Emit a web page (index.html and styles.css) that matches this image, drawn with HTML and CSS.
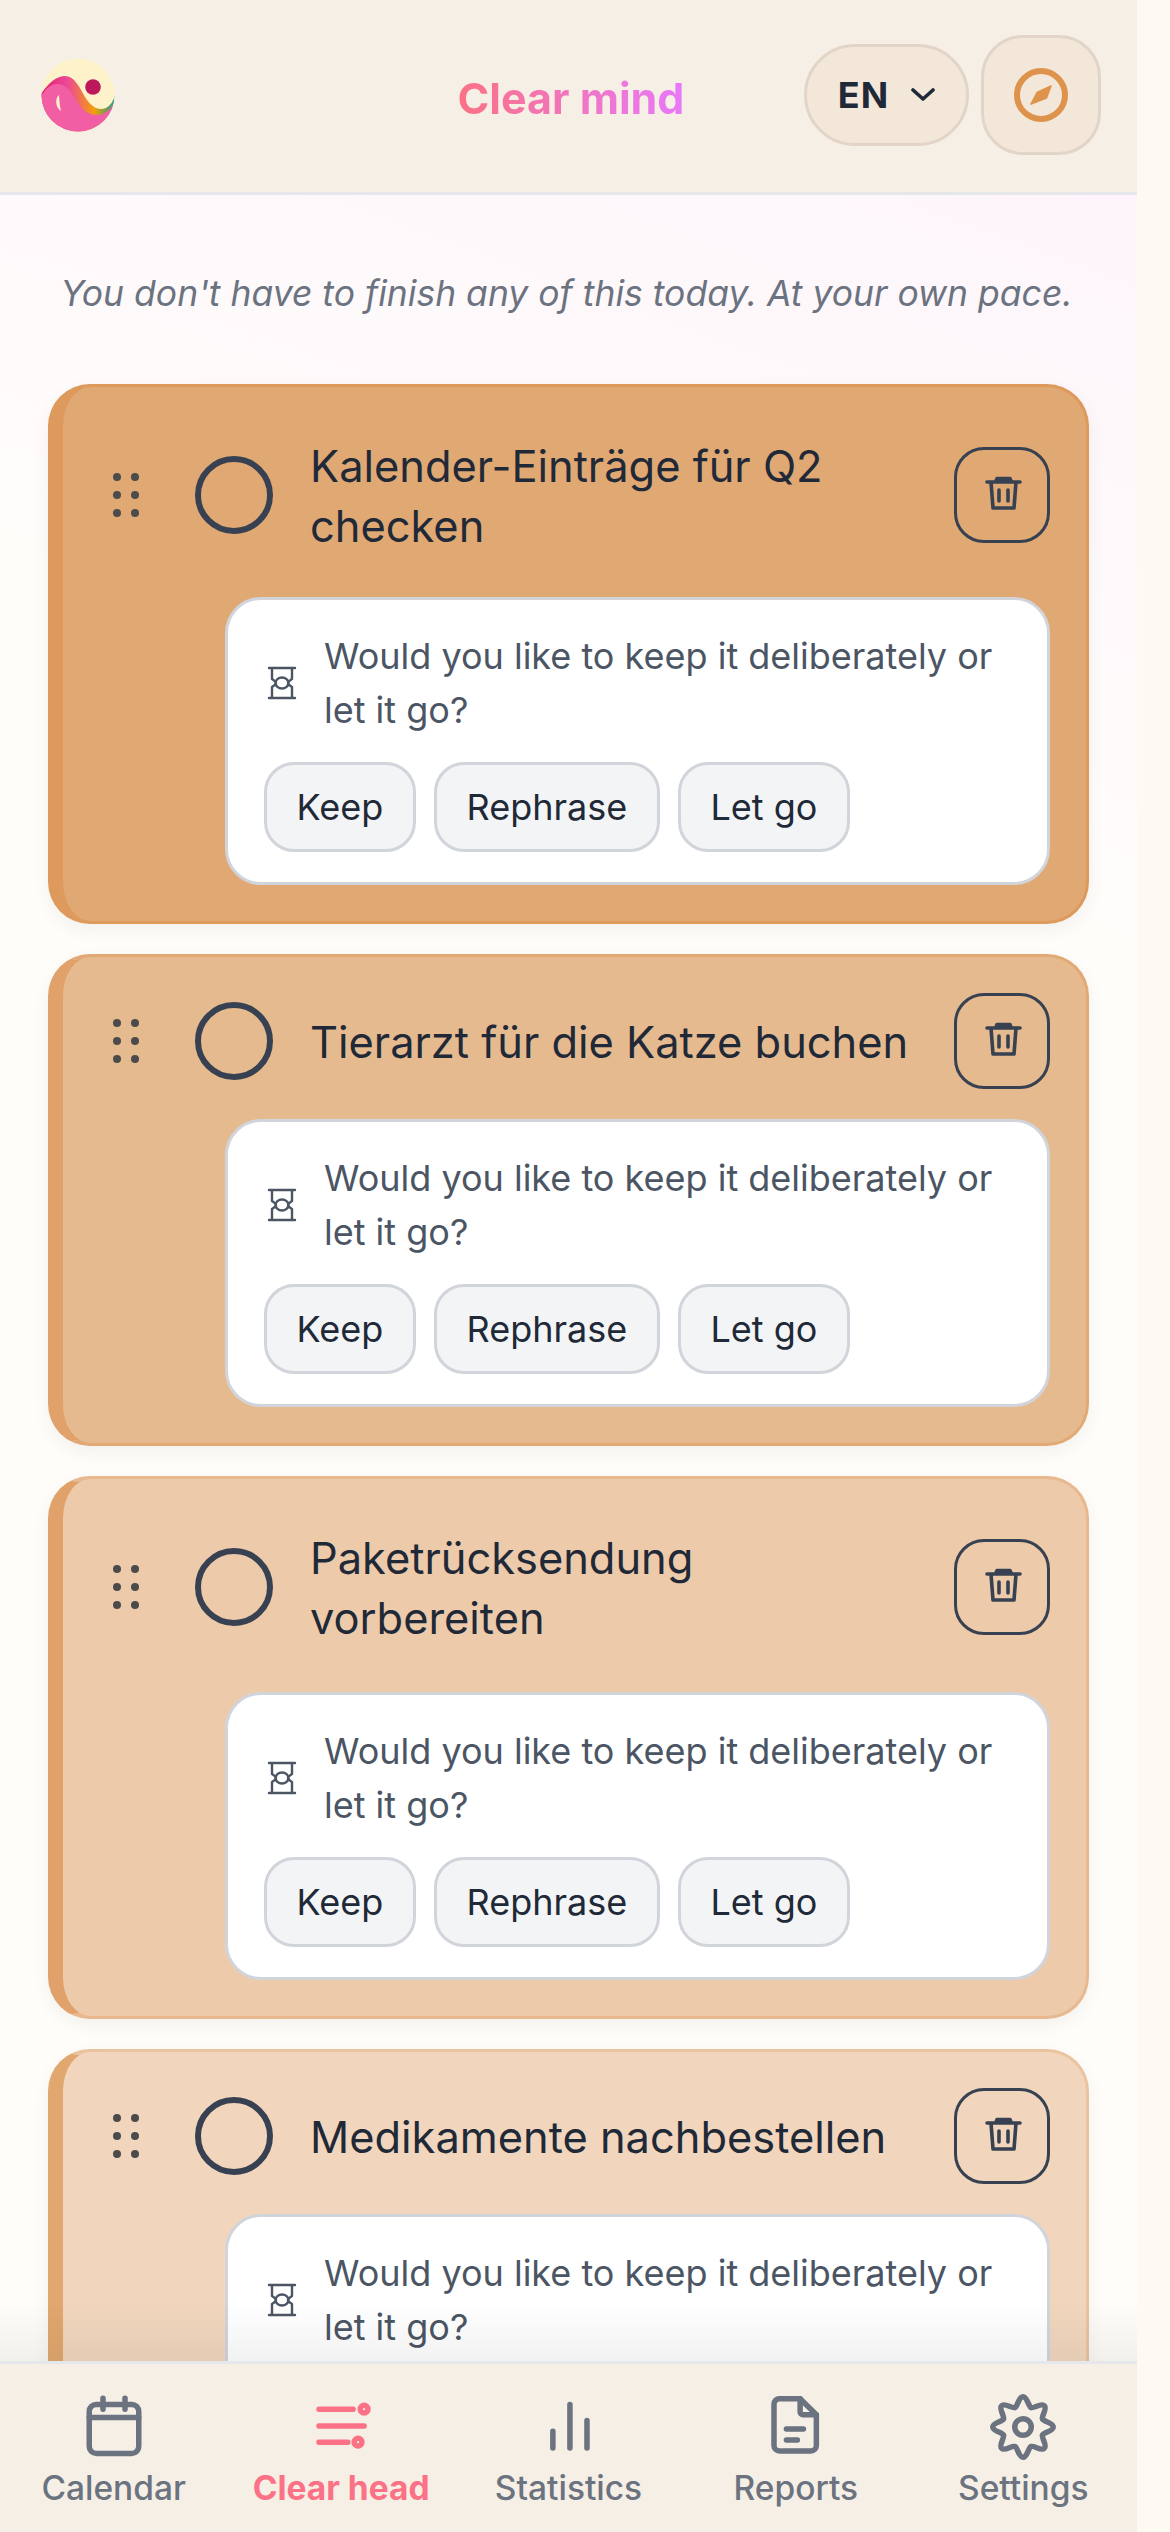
FILE: index.html
```html
<!DOCTYPE html>
<html lang="en">
<head>
  <meta charset="UTF-8" />
  <meta name="viewport" content="width=device-width, initial-scale=1.0"/>
  <title>Clear mind</title>
  <link rel="stylesheet" href="styles.css">
</head>
<body>
<svg class="defs" width="0" height="0" aria-hidden="true">
  <symbol id="dots" viewBox="0 0 60 60"><g fill="currentColor"><circle cx="21" cy="12" r="4"/><circle cx="39" cy="12" r="4"/><circle cx="21" cy="30" r="4"/><circle cx="39" cy="30" r="4"/><circle cx="21" cy="48" r="4"/><circle cx="39" cy="48" r="4"/></g></symbol>
  <symbol id="trash" viewBox="0 0 48 48"><g fill="none" stroke="currentColor" stroke-width="3.600" stroke-linecap="round" stroke-linejoin="round"><path d="M9 11h33M13 11l2 26h21l2-26M18 10l1-2.500h13l1 2.500M21 19v11M30 19v11"/></g></symbol>
  <symbol id="hourglass" viewBox="0 0 36 36"><g fill="none" stroke="currentColor" stroke-width="2.400" stroke-linecap="round"><path d="M5 3h26M5 33h26M8 3v11l4 3M28 3v11l-4 3M8 33v-11l4-3M28 33v-11l-4-3"/><ellipse cx="18" cy="18" rx="6.500" ry="5.500"/></g></symbol>
  <symbol id="lobe" viewBox="0 0 24 24"><path d="M19.110 9.050C19.570 10.160 23 10.400 23 12C23 13.600 19.570 13.840 19.110 14.950"/></symbol>
</svg>
<div class="app">
  <header class="topbar">
    <svg class="logo" viewBox="0 0 74 74">
      <defs>
        <linearGradient id="wave" x1="0" x2="1" y1="0" y2="0">
          <stop offset="0" stop-color="#e11d68"/><stop offset=".35" stop-color="#ec4899"/><stop offset=".72" stop-color="#f59e0b"/><stop offset="1" stop-color="#14a085"/>
        </linearGradient>
        <clipPath id="disc"><circle cx="37" cy="37" r="36.500"/></clipPath>
      </defs>
      <g clip-path="url(#disc)">
        <rect width="74" height="74" fill="#fdf2c9"/>
        <path d="M0 36C8 24 16 18 24 18c9 0 14 10 20 21 4 6 9 12 16 12 7 0 12-6 14-14v37H0z" fill="url(#wave)"/>
        <path d="M0 38c6-9 10-12 17-12 9 0 14 10 22 22 5 6 10 9 17 9 8 0 15-6 18-16v33H0z" fill="#f25ea3"/>
      </g>
      <circle cx="52" cy="29" r="7.800" fill="#be185d"/>
      <path d="M18 37c-4 3-4 12 2 16-1.500-5-1.500-11-2-16z" fill="#fdf2c9"/>
    </svg>
    <h1 class="brand">Clear mind</h1>
    <div class="topbar-actions">
      <button class="lang">EN
        <svg width="24" height="24" viewBox="0 0 24 24" fill="none" stroke="currentColor" stroke-width="3.600" stroke-linecap="round" stroke-linejoin="round"><path d="M2 7l10 9 10-9"/></svg>
      </button>
      <button class="compass">
        <svg width="54" height="54" viewBox="0 0 54 54"><circle cx="27" cy="27" r="24" fill="none" stroke="#dd934b" stroke-width="6"/><path fill-rule="evenodd" fill="#dd934b" stroke="#dd934b" stroke-width="1.500" stroke-linejoin="round" d="M37 18 23 24.500 17 36 32.500 30z M27.500 26l2 0-2 2-2 0z"/></svg>
      </button>
    </div>
  </header>

  <main class="content">
    <p class="hint">You don't have to finish any of this today. At your own pace.</p>

    <section class="card tone-1">
      <div class="card-row">
        <svg class="drag"><use href="#dots"/></svg>
        <span class="check"></span>
        <div class="task-title">Kalender-Einträge für Q2 checken</div>
        <button class="trash"><svg width="48" height="48"><use href="#trash"/></svg></button>
      </div>
      <div class="prompt">
        <div class="prompt-text"><svg class="glass"><use href="#hourglass"/></svg><p>Would you like to keep it deliberately or let it go?</p></div>
        <div class="prompt-actions"><button>Keep</button><button>Rephrase</button><button>Let go</button></div>
      </div>
    </section>

    <section class="card tone-2">
      <div class="card-row">
        <svg class="drag"><use href="#dots"/></svg>
        <span class="check"></span>
        <div class="task-title">Tierarzt für die Katze buchen</div>
        <button class="trash"><svg width="48" height="48"><use href="#trash"/></svg></button>
      </div>
      <div class="prompt">
        <div class="prompt-text"><svg class="glass"><use href="#hourglass"/></svg><p>Would you like to keep it deliberately or let it go?</p></div>
        <div class="prompt-actions"><button>Keep</button><button>Rephrase</button><button>Let go</button></div>
      </div>
    </section>

    <section class="card tone-3">
      <div class="card-row">
        <svg class="drag"><use href="#dots"/></svg>
        <span class="check"></span>
        <div class="task-title">Paketrücksendung vorbereiten</div>
        <button class="trash"><svg width="48" height="48"><use href="#trash"/></svg></button>
      </div>
      <div class="prompt">
        <div class="prompt-text"><svg class="glass"><use href="#hourglass"/></svg><p>Would you like to keep it deliberately or let it go?</p></div>
        <div class="prompt-actions"><button>Keep</button><button>Rephrase</button><button>Let go</button></div>
      </div>
    </section>

    <section class="card tone-4">
      <div class="card-row">
        <svg class="drag"><use href="#dots"/></svg>
        <span class="check"></span>
        <div class="task-title">Medikamente nachbestellen</div>
        <button class="trash"><svg width="48" height="48"><use href="#trash"/></svg></button>
      </div>
      <div class="prompt">
        <div class="prompt-text"><svg class="glass"><use href="#hourglass"/></svg><p>Would you like to keep it deliberately or let it go?</p></div>
        <div class="prompt-actions"><button>Keep</button><button>Rephrase</button><button>Let go</button></div>
      </div>
    </section>

    <div class="fade"></div>
  </main>

  <nav class="tabs">
    <a class="tab">
      <svg viewBox="0 0 24 24"><rect x="3" y="3.800" width="18" height="17.800" rx="2.500"/><path d="M8 1.500v4M16 1.500v4M3 8.500h18"/></svg>
      Calendar
    </a>
    <a class="tab active">
      <svg viewBox="0 0 24 24"><path d="M4 5.500h12.400M4 11.600h16.400M4 17.500h10.500"/><circle cx="20.400" cy="5.500" r="1.400"/><circle cx="18.200" cy="17.500" r="1.400"/></svg>
      Clear head
    </a>
    <a class="tab">
      <svg viewBox="0 0 24 24"><path d="M12.700 19.600V3.800M18.900 19.600V9.600M6.500 19.600v-6.100"/></svg>
      Statistics
    </a>
    <a class="tab">
      <svg viewBox="0 0 24 24"><path d="M13.500 1.700H6a2 2 0 0 0-2 2v15a2 2 0 0 0 2 2h11.400a2 2 0 0 0 2-2V7.500z"/><path d="M13.500 1.700v4.800a1 1 0 0 0 1 1h4.900M8.500 12.700h6.200M8.500 16.700h4"/></svg>
      Reports
    </a>
    <a class="tab">
      <svg viewBox="0 0 24 24">
        <circle cx="12" cy="12" r="3"/>
        <use href="#lobe"/>
        <use href="#lobe" transform="rotate(45 12 12)"/>
        <use href="#lobe" transform="rotate(90 12 12)"/>
        <use href="#lobe" transform="rotate(135 12 12)"/>
        <use href="#lobe" transform="rotate(180 12 12)"/>
        <use href="#lobe" transform="rotate(225 12 12)"/>
        <use href="#lobe" transform="rotate(270 12 12)"/>
        <use href="#lobe" transform="rotate(315 12 12)"/>
      </svg>
      Settings
    </a>
  </nav>
</div>
</body>
</html>
```

FILE: styles.css
```css
* {
  box-sizing: border-box;
}
html, body {
  margin: 0;
  height: 100%;
}
body {
  background-color: #fdf9f3;
  font-family: Inter, "Noto Sans", sans-serif;
  font-variation-settings: "opsz" 14;
  color: #1f2937;
  overflow: hidden;
}
button {
  font-family: inherit;
  font-variation-settings: inherit;
  cursor: pointer;
}
.defs {
  position: absolute;
}
.app {
  width: 1137px;
  height: 2532px;
  display: flex;
  flex-direction: column;
}

/* top bar */
.topbar {
  flex: none;
  height: 195px;
  display: grid;
  grid-template-columns: 1fr auto 1fr;
  align-items: center;
  padding: 0 36px 3px 41px;
  background: #f6efe6;
  border-bottom: 3px solid #e5e7eb;
}
.logo {
  width: 74px;
  height: 74px;
}
.brand {
  margin: 7px 0 0;
  font-size: 43px;
  font-weight: 700;
  background: linear-gradient(90deg, #fb7185, #e879f9);
  -webkit-background-clip: text;
  background-clip: text;
  color: transparent;
}
.topbar-actions {
  display: flex;
  justify-content: flex-end;
  align-items: center;
  gap: 12px;
}
.lang {
  width: 165px;
  height: 102px;
  display: flex;
  align-items: center;
  justify-content: center;
  gap: 22px;
  background: #f3e7d9;
  border: 3px solid #e2d5c8;
  border-radius: 51px;
  color: #1f2937;
  font-size: 36px;
  font-weight: 700;
  letter-spacing: 1px;
}
.compass {
  width: 120px;
  height: 120px;
  display: flex;
  align-items: center;
  justify-content: center;
  padding: 0;
  background: #f3e7d9;
  border: 3px solid #e2d5c8;
  border-radius: 42px;
}

/* list */
.content {
  flex: 1;
  min-height: 0;
  position: relative;
  overflow: hidden;
  padding: 0 48px;
  background: linear-gradient(200deg, #fdf5fb 0%, #fffdfa 30%, #fffdf8 100%);
}
.hint {
  margin: 0;
  height: 189px;
  padding: 8px 4px 0 0;
  display: flex;
  align-items: center;
  justify-content: center;
  font-size: 35.500px;
  font-style: italic;
  color: #6b7280;
  white-space: nowrap;
}
.card {
  margin-bottom: 30px;
  padding: 36px;
  border: 3px solid;
  border-left-width: 15px;
  border-radius: 42px;
  box-shadow: 0 6px 18px rgba(0, 0, 0, 0.05);
}
.tone-1 { background: #e0a873; border-color: #dd9a5c; }
.tone-2 { background: #e6ba8f; border-color: #e3a975; border-left-color: #e0a26a; }
.tone-3 { background: #edcaaa; border-color: #e8b88f; border-left-color: #e0a26a; }
.tone-4 { background: #f1d6bd; border-color: #eac3a0; border-left-color: #e0a76e; }
.card-row {
  display: flex;
  align-items: center;
}
.drag {
  flex: none;
  width: 60px;
  height: 60px;
  margin-left: -3px;
  color: #4b4b4b;
}
.check {
  flex: none;
  width: 78px;
  height: 78px;
  margin-left: 39px;
  border: 6px solid #374151;
  border-radius: 50%;
}
.task-title {
  flex: 1;
  padding: 13px 0 11px;
  margin: 0 30px 0 37px;
  font-size: 43.400px;
  line-height: 60px;
}
.trash {
  flex: none;
  width: 96px;
  height: 96px;
  display: flex;
  align-items: center;
  justify-content: center;
  padding: 0;
  background: transparent;
  border: 3px solid #374151;
  border-radius: 30px;
  color: #374151;
}
.prompt {
  margin: 30px 0 0 126px;
  padding: 29px 33px 30px 36px;
  background: #fff;
  border: 3px solid #d1d5db;
  border-radius: 36px;
}
.tone-3 .prompt {
  margin-top: 33px;
}
.prompt-text {
  display: flex;
  align-items: center;
  gap: 24px;
  color: #4b5563;
  font-size: 36px;
  line-height: 54px;
}
.prompt-text p {
  margin: 0;
}
.glass {
  flex: none;
  width: 36px;
  height: 36px;
}
.prompt-actions {
  display: flex;
  gap: 18px;
  margin-top: 25px;
}
.prompt-actions button {
  height: 90px;
  padding: 0 29.600px;
  background: #f3f4f6;
  border: 3px solid #d1d5db;
  border-radius: 30px;
  color: #1f2937;
  font-size: 36px;
}
.fade {
  position: absolute;
  left: 0;
  right: 0;
  bottom: 0;
  height: 60px;
  background: linear-gradient(to bottom, rgba(0, 0, 0, 0), rgba(0, 0, 0, 0.05));
}

/* bottom tabs */
.tabs {
  flex: none;
  height: 171px;
  display: grid;
  grid-template-columns: repeat(5, 1fr);
  background: #f6efe6;
  border-top: 3px solid #e5e7eb;
}
.tab {
  display: flex;
  flex-direction: column;
  align-items: center;
  padding-top: 30px;
  gap: 4px;
  color: #6b7280;
  font-size: 33.500px;
  font-weight: 500;
  line-height: 48px;
}
.tab svg {
  width: 66px;
  height: 66px;
  fill: none;
  stroke: currentColor;
  stroke-width: 2;
  stroke-linecap: round;
  stroke-linejoin: round;
}
.tab.active {
  color: #fb7185;
  font-weight: 700;
}
```
